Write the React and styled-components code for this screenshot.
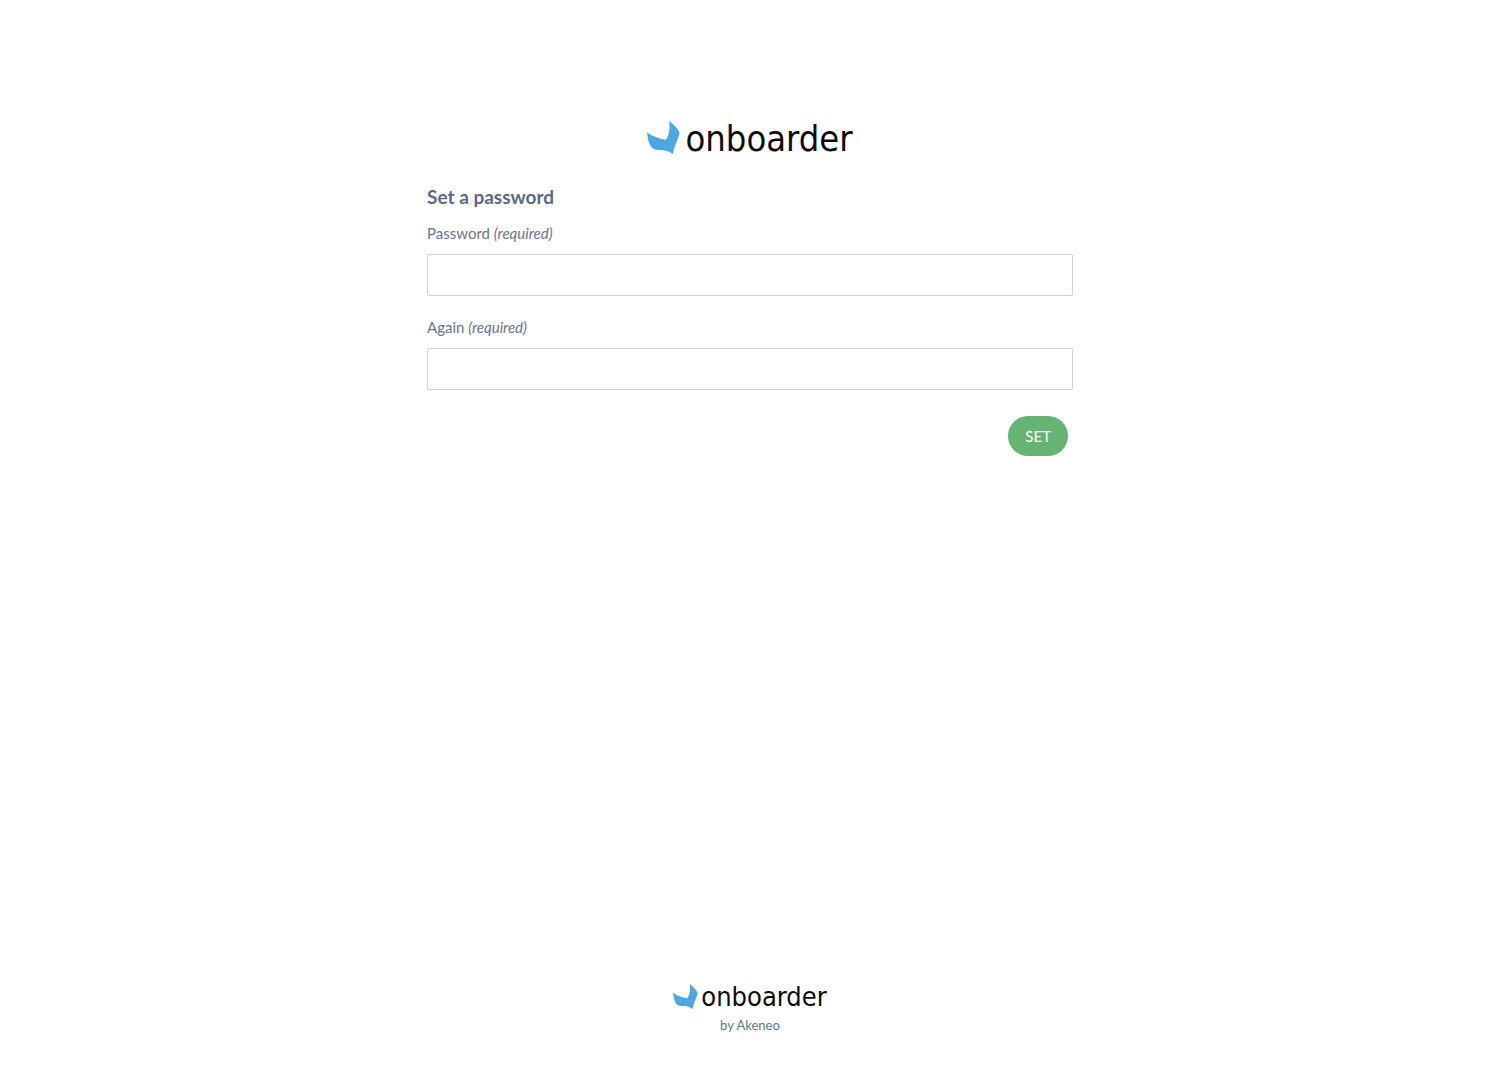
import React from "react";
import styled, { createGlobalStyle } from "styled-components";

const GlobalStyle = createGlobalStyle`
  *, *::before, *::after { box-sizing: border-box; }
  body {
    margin: 0;
    background: #fff;
    color: #67768a;
    font-family: Lato, "Liberation Sans", sans-serif;
    font-size: 15px;
    line-height: 20px;
  }
`;

const Page = styled.div`
  display: flex;
  flex-direction: column;
  align-items: center;
  min-height: 100vh;
  padding: 116px 24px 32px;
`;

const Main = styled.main`
  display: flex;
  flex-direction: column;
  width: 100%;
  max-width: 646px;
`;

const Brand = styled.div`
  display: flex;
  align-items: center;
  justify-content: center;
  gap: ${({ $small }) => ($small ? 3 : 5)}px;
  color: #0b0b0b;
  font-family: "DejaVu Sans Condensed", "DejaVu Sans", sans-serif;
  font-size: ${({ $small }) => ($small ? 27 : 36)}px;
  line-height: ${({ $small }) => ($small ? 32 : 46)}px;
`;

const Mark = styled.svg`
  display: block;
  flex: none;
  width: ${({ $small }) => ($small ? 25 : 33)}px;
  height: ${({ $small }) => ($small ? 25 : 33)}px;
  margin-bottom: ${({ $small }) => ($small ? 2 : 4)}px;
`;

const Form = styled.form`
  display: flex;
  flex-direction: column;
  margin-top: 23px;
`;

const Title = styled.h1`
  margin: 0 0 14px;
  color: #5a6a82;
  font-size: 19px;
  font-weight: 700;
  line-height: 24px;
`;

const Field = styled.div`
  display: flex;
  flex-direction: column;
  gap: 11px;
  margin-bottom: 21px;
`;

const Input = styled.input`
  width: 100%;
  height: 42px;
  padding: 0 14px;
  border: 1px solid #d0d2d5;
  border-radius: 2px;
  background: #fff;
  color: inherit;
  font: inherit;
`;

const Actions = styled.div`
  display: flex;
  justify-content: flex-end;
  padding: 5px 5px 0;
`;

const Button = styled.button`
  height: 40px;
  padding: 0 17px;
  border: 0;
  border-radius: 20px;
  background: #67b373;
  color: #fff;
  font: inherit;
  cursor: pointer;
`;

const Footer = styled.footer`
  margin-top: auto;
  font-size: 13px;
  text-align: center;
`;

const Tagline = styled.p`
  margin: 2px 0 0;
`;

function Logo({ small }) {
  return (
    <Brand $small={small}>
      <Mark $small={small} viewBox="0 0 98 98" aria-hidden="true">
        <path
          fill="#50a7df"
          d="M65 0C77 8 89 19 96 33C97 36 97 39 95 44C90 60 80 76 77 98C64 88 50 86 35 86C22 86 15 82 11 75C4 64 2 50 0 34C16 45 34 52 56 56C67 39 69 20 65 0Z"
        />
      </Mark>
      <span>onboarder</span>
    </Brand>
  );
}

function PasswordField({ id, label }) {
  return (
    <Field>
      <label htmlFor={id}>
        {label} <em>(required)</em>
      </label>
      <Input id={id} name={id} type="password" autoComplete="new-password" required />
    </Field>
  );
}

export default function App() {
  return (
    <>
      <GlobalStyle />
      <Page>
        <Main>
          <Logo />
          <Form onSubmit={(event) => event.preventDefault()}>
            <Title>Set a password</Title>
            <PasswordField id="password" label="Password" />
            <PasswordField id="password-again" label="Again" />
            <Actions>
              <Button type="submit">SET</Button>
            </Actions>
          </Form>
        </Main>
        <Footer>
          <Logo small />
          <Tagline>by Akeneo</Tagline>
        </Footer>
      </Page>
    </>
  );
}
